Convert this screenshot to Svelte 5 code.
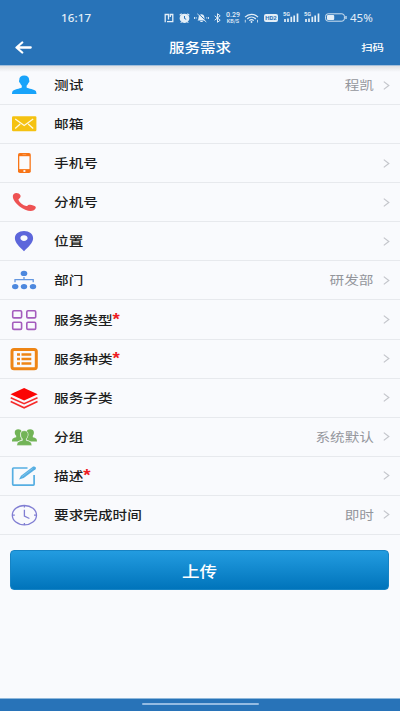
<script>
    const rows = [
        { icon: "user", label: "测试", value: "程凯", arrow: true },
        { icon: "mail", label: "邮箱" },
        { icon: "mobile", label: "手机号", arrow: true },
        { icon: "phone", label: "分机号", arrow: true },
        { icon: "pin", label: "位置", arrow: true },
        { icon: "org", label: "部门", value: "研发部", arrow: true },
        { icon: "grid", label: "服务类型", required: true, arrow: true },
        { icon: "list", label: "服务种类", required: true, arrow: true },
        { icon: "layers", label: "服务子类", arrow: true },
        { icon: "group", label: "分组", value: "系统默认", arrow: true },
        { icon: "edit", label: "描述", required: true, arrow: true },
        { icon: "clock", label: "要求完成时间", value: "即时", arrow: true },
    ];
</script>

<main>
    <header>
        <div class="status">
            <span class="time">16:17</span>
            <div class="indicators">
                <svg class="nfc" width="10" height="10" viewBox="0 0 10 10">
                    <path d="M1.2 9.2V1.5h3.3v5M3 8.7h5.8V1.5H6.300v2.500" stroke-width="1.3" />
                </svg>
                <svg class="alarm" width="11" height="10" viewBox="0 0 11 10">
                    <ellipse cx="5.5" cy="5.3" rx="4.3" ry="4" fill="#e3eef7" />
                    <path d="M.7 2.2l2-1.5M10.3 2.2l-2-1.5M2.5 9.3l-.8.6M8.5 9.3l.8.6" />
                    <path d="M5.5 3v2.5l1.7.8" stroke="#2873b8" stroke-width="1" />
                </svg>
                <svg class="mute" width="15" height="10" viewBox="0 0 15 10">
                    <path d="M3.5 7.5c1.2-1 .8-2.2 1.2-3.7C5.2 2 6.2 1.3 7.5 1.3s2.3.7 2.8 2.5c.4 1.5 0 2.7 1.2 3.7zM6.3 8h2.4v1H6.3z" fill="#e3eef7" stroke="none" />
                    <path d="M3.8.3l9.500 8.500" stroke="#2873b8" stroke-width="1" />
                    <path d="M3.3.8l9 8.2M.5 4v2M2.2 4.2v1.4M14.5 4v2M12.8 4.2v1.4" stroke-width=".9" />
                </svg>
                <svg class="bluetooth" width="7" height="10" viewBox="0 0 7 10">
                    <path d="M.7 2.8l5.5 4.4L3.5 9.3V.7l2.7 2.1L.7 7.2" stroke-width="1" />
                </svg>
                <span class="speed"><b>0.29</b><b>KB/S</b></span>
                <svg class="wifi" width="15" height="10" viewBox="0 0 15 10">
                    <path d="M1 4.2C4.7.3 10.3.3 14 4.2M3.2 6c2.5-2.4 6.1-2.4 8.6 0M5.3 7.6c1.3-1.2 3.1-1.2 4.4 0" />
                    <circle cx="7.5" cy="9" r=".9" fill="#e3eef7" stroke="none" />
                    <path d="M1.3 6.8v2.7M13.5 6.8v2.7" stroke-width=".8" />
                </svg>
                <span class="hd">HD2</span>
                {#each [1, 2] as sim (sim)}
                    <span class="signal">
                        <i>5G</i>
                        <svg width="16" height="9" viewBox="0 0 16 9">
                            <path d="M2 6v3M5 5.5V9M8.3 3.8V9M11.2 2.5V9M14.5.5V9" stroke-width="1.7" />
                        </svg>
                    </span>
                {/each}
                <svg class="battery" width="22" height="9" viewBox="0 0 22 9">
                    <rect x=".6" y=".8" width="18.8" height="7.4" rx="2.5" stroke-width=".9" />
                    <rect x="2" y="2" width="7.2" height="5" rx="1" fill="#e3eef7" stroke="none" />
                    <path d="M21 3v3" />
                </svg>
                <span class="percent">45%</span>
            </div>
        </div>
        <nav>
            <button class="back" aria-label="返回">
                <svg width="17" height="13" viewBox="0 0 17 13">
                    <path d="M15.7 6.5H1.8M7.2 1.5L1.5 6.5l5.7 5" />
                </svg>
            </button>
            <h1>服务需求</h1>
            <button class="scan">扫码</button>
        </nav>
    </header>

    <ul>
        {#each rows as row (row.label)}
            <li>
                <svg class="icon" width="28" height="24" viewBox="0 0 28 24">
                    {#if row.icon === "user"}
                        <path fill="#18a3fa" d="M14.2 2.4c3.2 0 5 1.7 4.9 4.4 0 .8.4.6.3 1.5-.1 1-.7 1.3-1 1.8-.5 1.1-1.1 2-1.8 2.6v1.7c1.8 1.2 8 1.8 9.2 3.7.5.9.7 2.9.7 2.9H2s.1-2 .7-2.9c1.2-1.9 7.3-2.5 9.1-3.7v-1.7c-.7-.6-1.3-1.5-1.8-2.6-.3-.5-.9-.8-1-1.8-.1-.9.3-.7.3-1.5-.1-2.7 1.7-4.4 4.9-4.4z" />
                    {:else if row.icon === "mail"}
                        <rect x="2" y="4.2" width="24.4" height="15" rx="1.2" fill="#f5c211" />
                        <path d="M5.2 7l9 6.5 9-6.5M5.2 16.6l5-4.6M23.2 16.6l-5-4.6" fill="none" stroke="#fff9df" stroke-width="1.3" />
                    {:else if row.icon === "mobile"}
                        <rect x="8" y="2" width="12.8" height="20" rx="1.8" fill="#f87517" />
                        <rect x="9.3" y="5.2" width="10.2" height="12.9" fill="#fbfbfd" />
                        <path d="M12.5 3.6h3.8" stroke="#fbb27c" stroke-width=".6" />
                        <ellipse cx="14.4" cy="20" rx="1.2" ry=".9" fill="#fbfbfd" />
                    {:else if row.icon === "phone"}
                        <path fill="#ee5253" d="M3.5 4.3C5 2.7 7 2.5 8.7 3.6c1.9 1.2 2.6 3 1.2 4.3-.8.8-1.7 1.1-1.4 2 1.1 2.7 4.5 5.3 7.7 6.2 1.2.2 1.6-.9 2.8-1.3 1.9-.6 5.4.6 6.6 1.9.8 1-.6 2.9-2.3 3.7-3.2 1.5-9.4-.7-13.7-4C5.2 13.2 1.2 7.6 3.5 4.3z" />
                    {:else if row.icon === "pin"}
                        <path fill="#5d66db" fill-rule="evenodd" d="M14 2c5.3 0 9.1 3 9.1 7.2 0 4.6-4.7 8.6-9.1 13-4.4-4.4-9.1-8.4-9.1-13C4.9 5 8.7 2 14 2zm0 4.2c-2 0-3.6 1.2-3.6 2.9S12 12 14 12s3.6-1.2 3.6-2.9S16 6.2 14 6.2z" />
                    {:else if row.icon === "org"}
                        <g fill="#4d88de">
                            <ellipse cx="14" cy="5.4" rx="3.3" ry="2.7" />
                            <ellipse cx="5.2" cy="18.6" rx="3.2" ry="2.7" />
                            <ellipse cx="14" cy="18.6" rx="3.2" ry="2.7" />
                            <ellipse cx="23" cy="18.6" rx="3.2" ry="2.7" />
                        </g>
                        <path d="M5 14.3v-2.6h18.2v2.6M14 9v2.7" fill="none" stroke="#6497e0" stroke-width="1.3" />
                    {:else if row.icon === "grid"}
                        <g fill="none" stroke="#a45cbd" stroke-width="1.6">
                            <rect x="2.7" y="2.7" width="8.9" height="7.2" rx="1.2" />
                            <rect x="16.8" y="2.7" width="8.9" height="7.2" rx="1.2" />
                            <rect x="2.7" y="14.2" width="8.9" height="7.2" rx="1.2" />
                            <rect x="16.8" y="14.2" width="8.9" height="7.2" rx="1.2" />
                        </g>
                    {:else if row.icon === "list"}
                        <rect x="2" y="2.5" width="24.3" height="19.3" rx="2" fill="none" stroke="#ee8515" stroke-width="3" />
                        <path d="M7 7.6h3M7 12.1h3M7 16.6h3M11.500 7.6h9.8M11.500 12.1h9.8M11.500 16.6h9.8" stroke="#ee8515" stroke-width="2.5" />
                    {:else if row.icon === "layers"}
                        <path d="M14.1 1.9l13.6 6.3-13.6 6.2L.5 8.2z" fill="#fb0505" />
                        <path d="M.7 11.7l13.4 6.1 13.4-6.1M.7 15.5l13.4 6.3 13.4-6.3" fill="none" stroke="#f62a2a" stroke-width="1.5" />
                    {:else if row.icon === "group"}
                        <path fill="#72b457" d="M8.2 4.2c2 0 3 .8 3.4 2.1-1.5 1.2-1.8 2.9-1.4 4.7.3 1.3.8 2 1.4 2.7v1c-1.5.8-3 1.1-4 1.8H2c0-3 1.1-3.4 4.2-4.2v-1.5C4.2 8.8 3.9 4.2 8.2 4.2zM20.1 4.2c-2 0-3 .8-3.4 2.1 1.5 1.2 1.8 2.9 1.4 4.7-.3 1.3-.8 2-1.4 2.7v1c1.5.8 3 1.1 4 1.8H27c0-3-1.1-3.4-4.2-4.2v-1.5c1.7-2 2-6.6-2.7-6.6z" />
                        <path fill="#72b457" stroke="#fafbfd" stroke-width=".4" d="M14.3 5.7c2.9 0 4.1 1.8 3.7 4.5-.2 1.7-.9 2.8-1.7 3.6v1.6c3.5.8 5.3 1.2 5.5 5H6.9c.2-3.8 2-4.2 5.5-5v-1.6c-.8-.8-1.5-1.9-1.7-3.6-.4-2.7.7-4.5 3.6-4.5z" />
                    {:else if row.icon === "edit"}
                        <path d="M17.5 4h-14q-.8 0-.8.7v15.600q0 .8.8.8h19.800q.8 0 .8-.8V11" fill="none" stroke="#56aee2" stroke-width="1.7" />
                        <path d="M9 15.6l2-3.8L22.5 3c1.6-1.2 4.6.7 3 2.2L13.7 14.1z" fill="#56aee2" />
                        <path d="M12 12.6L22.7 4.5" stroke="#a9d7f2" stroke-width=".5" />
                    {:else if row.icon === "clock"}
                        <g fill="none" stroke="#817ed3" stroke-width="1.3">
                            <ellipse cx="14.4" cy="12.2" rx="12.1" ry="9.7" />
                            <path d="M14.4 2.5v2M14.4 19.9v2M2.3 12.2h2.5M24 12.2h2.5M14.4 6.8v6.4l5 2.3" />
                        </g>
                    {/if}
                </svg>
                <span class="label">{row.label}{#if row.required}<em>*</em>{/if}</span>
                {#if row.value}
                    <span class="value">{row.value}</span>
                {/if}
                {#if row.arrow}
                    <svg class="arrow" width="7" height="9" viewBox="0 0 7 9">
                        <path d="M.8.6l5 3.9-5 3.9" />
                    </svg>
                {/if}
            </li>
        {/each}
    </ul>

    <button class="submit"><span>上传</span></button>

    <footer><div class="handle"></div></footer>
</main>

<style>
    :global(body) {
        margin: 0;
    }

    main {
        background: #f9fafd;
        box-sizing: border-box;
        display: flex;
        flex-direction: column;
        font-family: "Noto Sans CJK SC", "Noto Sans", sans-serif;
        height: 711px;
        overflow: hidden;
        width: 400px;
    }

    button {
        background: none;
        border: none;
        color: inherit;
        font-family: inherit;
        padding: 0;
    }

    header {
        background: #2873b8;
        border-bottom: 1px solid #a3bfdb;
        color: #ffffff;
        flex: none;
        height: 65px;
    }

    .status {
        align-items: center;
        color: #e3eef7;
        display: flex;
        height: 31px;
        justify-content: space-between;
        padding: 2px 27px 0 61px;
    }

    .status svg {
        fill: none;
        flex: none;
        stroke: #e3eef7;
        stroke-width: 1.2;
    }

    .time {
        font-family: "Noto Sans", sans-serif;
        font-size: 10.5px;
        font-weight: 500;
        letter-spacing: 0.15px;
        transform: scaleX(1.1);
        transform-origin: left;
    }

    .indicators {
        align-items: center;
        display: flex;
    }

    .nfc {
        margin-right: 5px;
    }

    .alarm {
        margin-right: 4px;
    }

    .mute {
        margin-right: 5px;
    }

    .bluetooth {
        margin-right: 4px;
    }

    .speed {
        display: flex;
        flex-direction: column;
        font-family: Roboto, sans-serif;
        font-size: 7px;
        line-height: 7px;
        margin-right: 3px;
        text-align: center;
        width: 16px;
    }

    .speed b {
        font-weight: 500;
    }

    .speed b + b {
        font-size: 5.5px;
        line-height: 5px;
    }

    .wifi {
        margin-right: 5px;
    }

    .hd {
        background: #e3eef7;
        border-radius: 2px;
        color: #2873b8;
        font-family: Roboto, sans-serif;
        font-size: 6px;
        font-weight: 700;
        line-height: 8px;
        margin-right: 5px;
        text-align: center;
        width: 14px;
    }

    .signal {
        display: flex;
        margin-right: 5px;
        position: relative;
    }

    .signal i {
        font: 700 5.5px Roboto, sans-serif;
        left: 0;
        position: absolute;
        top: -2px;
    }

    .battery {
        margin-right: 3px;
    }

    .percent {
        font-family: "Noto Sans", sans-serif;
        font-size: 10.5px;
        transform: scaleX(1.1);
        transform-origin: left;
        width: 23px;
    }

    nav {
        align-items: center;
        display: grid;
        grid-template-columns: 80px 1fr 80px;
        height: 28px;
    }

    .back {
        display: flex;
        padding-left: 15px;
    }

    .back path {
        fill: none;
        stroke: #ffffff;
        stroke-linecap: round;
        stroke-linejoin: round;
        stroke-width: 2.3;
    }

    h1 {
        font-size: 13px;
        font-weight: 500;
        line-height: 20px;
        margin: 0;
        text-align: center;
        transform: scaleX(1.19);
    }

    .scan {
        font-size: 9.5px;
        font-weight: 500;
        padding-right: 16px;
        text-align: right;
        transform: scaleX(1.2);
        transform-origin: 64px 50%;
    }

    ul {
        background: linear-gradient(#e0e1e4, #f9fafd 6px);
        display: grid;
        flex: none;
        grid-template-rows: repeat(12, 1fr);
        height: 469px;
        list-style: none;
        margin: 0;
        padding: 0;
    }

    li {
        align-items: center;
        border-bottom: 1px solid #e7e9ed;
        box-sizing: border-box;
        display: flex;
        padding: 0 10px;
    }

    .icon {
        flex: none;
        margin-right: 16px;
    }

    .label,
    .value {
        font-size: 12.5px;
        line-height: 20px;
        transform: scaleX(1.17);
        transform-origin: left;
        white-space: nowrap;
    }

    .label {
        color: #1d1e21;
        font-weight: 500;
        margin-right: auto;
    }

    .label em {
        color: #ee1c24;
        font-family: "Liberation Sans", sans-serif;
        font-size: 16px;
        font-style: normal;
        font-weight: 700;
        line-height: 1;
    }

    .value {
        color: #94969c;
        margin-right: 9px;
        transform-origin: right;
    }

    .arrow path {
        fill: none;
        stroke: #c3c5ca;
        stroke-width: 1.2;
    }

    .submit {
        background: linear-gradient(#239ce0, #0074bb);
        border: 1px solid #1683c4;
        border-radius: 4px;
        color: #ffffff;
        flex: none;
        height: 40px;
        margin: 15px 11px 0 10px;
    }

    .submit span {
        display: block;
        font-size: 15px;
        font-weight: 500;
        line-height: 22px;
        padding-top: 1px;
        transform: scaleX(1.17);
    }

    footer {
        background: #2873b8;
        border-top: 1px solid #8fb8dc;
        display: flex;
        flex: none;
        height: 12px;
        justify-content: center;
        margin-top: auto;
    }

    .handle {
        background: #94bbe2;
        border-radius: 1px;
        height: 2px;
        margin-top: 4px;
        width: 117px;
    }
</style>
